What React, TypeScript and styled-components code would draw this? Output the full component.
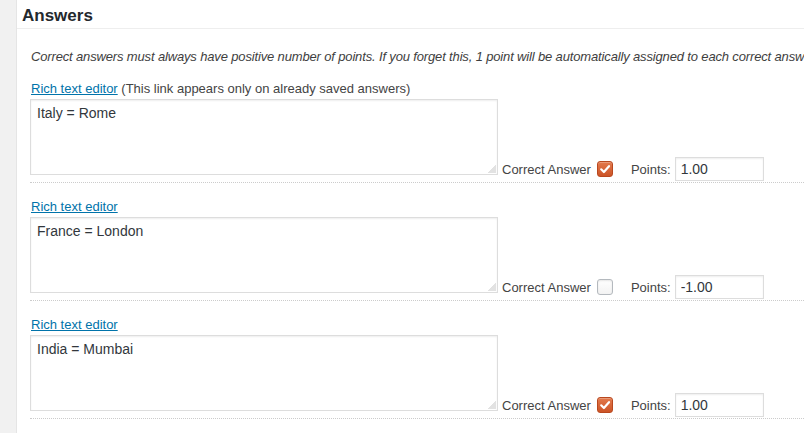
import React from "react";
import styled, { createGlobalStyle } from "styled-components";

const Global = createGlobalStyle`
  html, body { margin: 0; padding: 0; background: #fff; overflow: hidden; }
  body { font-family: "Liberation Sans", Arial, sans-serif; color: #444; }
  #root { min-height: 433px; }
`;

const Page = styled.div`
  display: flex;
  min-height: 433px;
  width: 804px;
  overflow: hidden;
`;

const Strip = styled.div`
  width: 16px;
  flex: none;
  background: #f1f1f1;
  border-right: 1px solid #e5e5e5;
`;

const Main = styled.div`
  flex: 1;
  min-width: 0;
  background: #fff;
`;

const Heading = styled.h2`
  margin: 0;
  padding: 6px 0 2px 5px;
  height: 20px;
  line-height: 20px;
  font-size: 17px;
  font-weight: 700;
  color: #23282d;
  border-bottom: 1px solid #eee;
`;

const Body = styled.div`
  padding: 20px 0 0 13px;
`;

const Intro = styled.p`
  margin: 0 0 0 1px;
  font-size: 13px;
  line-height: 16px;
  font-style: italic;
  letter-spacing: -0.15px;
  white-space: nowrap;
  color: #3e3e3e;
`;

const Block = styled.div`
  padding: 15px 0 1px;
  border-bottom: 1px dotted #ccc;
`;

const LinkLine = styled.div`
  margin: 0 0 3px 1px;
  padding-top: 1px;
  font-size: 13px;
  line-height: 15px;
  white-space: nowrap;
  color: #444;
`;

const EditorLink = styled.a`
  color: #0073aa;
  text-decoration: underline;
  cursor: pointer;
`;

const Row = styled.div`
  display: flex;
  align-items: flex-end;
`;

const AreaWrap = styled.div`
  position: relative;
  flex: none;
  margin-bottom: 6px;
  &::after {
    content: "";
    position: absolute;
    right: 2px;
    bottom: 2px;
    width: 8px;
    height: 8px;
    background: linear-gradient(135deg, transparent 50%, #e2e2e2 50%);
  }
`;

const Area = styled.textarea`
  display: block;
  box-sizing: border-box;
  width: 468px;
  height: 76px;
  margin: 0;
  padding: 4px 6px;
  border: 1px solid #ddd;
  border-radius: 0;
  box-shadow: inset 0 1px 2px rgba(0, 0, 0, 0.07);
  font-family: "Liberation Sans", Arial, sans-serif;
  font-size: 14px;
  line-height: 18px;
  color: #32373c;
  resize: none;
  outline: none;
  background: #fff;
`;

const Controls = styled.div`
  display: flex;
  align-items: center;
  height: 24px;
  margin-left: 4px;
  font-size: 13px;
  color: #444;
  white-space: nowrap;
`;

const Check = styled.span<{ $checked: boolean }>`
  box-sizing: border-box;
  display: inline-flex;
  align-items: center;
  justify-content: center;
  width: 16px;
  height: 16px;
  margin-left: 6px;
  border-radius: 3px;
  border: 1px solid ${(p) => (p.$checked ? "#b9481f" : "#b4b9be")};
  background: ${(p) =>
    p.$checked ? "linear-gradient(#e3794c, #cc5427)" : "linear-gradient(#fff, #f3f3f3)"};
  box-shadow: ${(p) =>
    p.$checked ? "inset 0 1px 0 rgba(255,255,255,0.25)" : "inset 0 1px 2px rgba(0,0,0,0.1)"};
`;

const PointsLabel = styled.span`
  margin-left: 18px;
`;

const PointsInput = styled.input`
  box-sizing: border-box;
  width: 89px;
  height: 24px;
  margin: 0 0 0 4px;
  padding: 0 5px;
  border: 1px solid #ddd;
  border-radius: 0;
  box-shadow: inset 0 1px 2px rgba(0, 0, 0, 0.07);
  font-family: "Liberation Sans", Arial, sans-serif;
  font-size: 14px;
  color: #32373c;
  outline: none;
  background: #fff;
`;

const answers = [
  { text: "Italy = Rome", correct: true, points: "1.00", note: true },
  { text: "France = London", correct: false, points: "-1.00", note: false },
  { text: "India = Mumbai", correct: true, points: "1.00", note: false },
];

const Tick = () => (
  <svg width="12" height="12" viewBox="0 0 12 12" aria-hidden="true">
    <path d="M2.2 6.3 L4.9 9 L10 3.2" fill="none" stroke="#fff" strokeWidth="2.2" strokeLinecap="round" strokeLinejoin="round" />
  </svg>
);

export default function App() {
  return (
    <>
      <Global />
      <Page>
        <Strip />
        <Main>
          <Heading>Answers</Heading>
          <Body>
            <Intro>
              Correct answers must always have positive number of points. If you forget this, 1 point will be
              automatically assigned to each correct answer.
            </Intro>
            {answers.map((a, i) => (
              <Block key={i}>
                <LinkLine>
                  <EditorLink>Rich text editor</EditorLink>
                  {a.note && " (This link appears only on already saved answers)"}
                </LinkLine>
                <Row>
                  <AreaWrap>
                    <Area defaultValue={a.text} />
                  </AreaWrap>
                  <Controls>
                    <span>Correct Answer</span>
                    <Check $checked={a.correct}>{a.correct && <Tick />}</Check>
                    <PointsLabel>Points:</PointsLabel>
                    <PointsInput defaultValue={a.points} />
                  </Controls>
                </Row>
              </Block>
            ))}
          </Body>
        </Main>
      </Page>
    </>
  );
}
